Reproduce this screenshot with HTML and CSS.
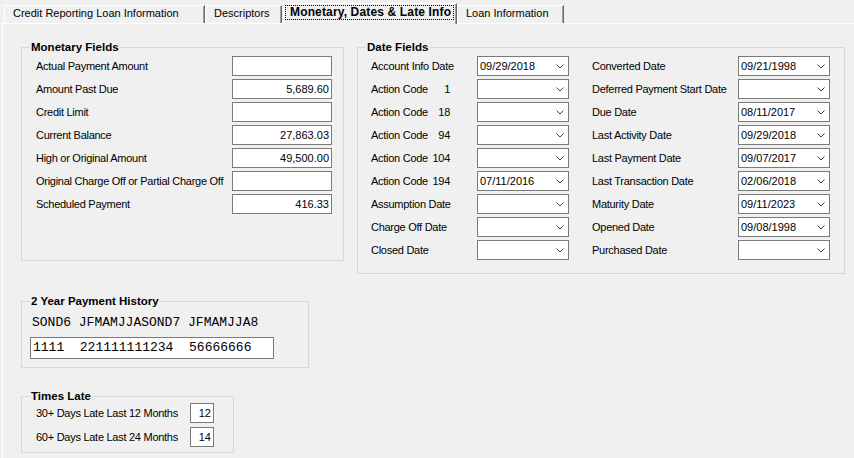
FILE: index.html
```html
<!DOCTYPE html>
<html>
<head>
<meta charset="utf-8">
<link rel="stylesheet" href="styles.css">
</head>
<body>
<div class="tabs">
  <div class="tab t1">Credit Reporting Loan Information</div>
  <div class="tab t2">Descriptors</div>
  <div class="tab sel"><span class="focus">Monetary, Dates &amp; Late Info</span></div>
  <div class="tab t4">Loan Information</div>
</div>
<div class="page">
  <div class="left">
    <fieldset class="grp monetary">
      <legend>Monetary Fields</legend>
      <div class="mrows">
        <span class="lbl">Actual Payment Amount</span><span class="txt"></span>
        <span class="lbl">Amount Past Due</span><span class="txt">5,689.60</span>
        <span class="lbl">Credit Limit</span><span class="txt"></span>
        <span class="lbl">Current Balance</span><span class="txt">27,863.03</span>
        <span class="lbl">High or Original Amount</span><span class="txt">49,500.00</span>
        <span class="lbl">Original Charge Off or Partial Charge Off</span><span class="txt"></span>
        <span class="lbl">Scheduled Payment</span><span class="txt">416.33</span>
      </div>
    </fieldset>
    <fieldset class="grp history">
      <legend>2 Year Payment History</legend>
      <div class="hhead">SOND6 JFMAMJJASOND7 JFMAMJJA8</div>
      <div class="hbox">1111  221111111234  56666666</div>
    </fieldset>
    <fieldset class="grp late">
      <legend>Times Late</legend>
      <div class="lrows">
        <span class="lbl">30+ Days Late Last 12 Months</span><span class="txt">12</span>
        <span class="lbl">60+ Days Late Last 24 Months</span><span class="txt">14</span>
      </div>
    </fieldset>
  </div>
  <fieldset class="grp dates">
    <legend>Date Fields</legend>
    <div class="dgrid">
      <span class="lbl">Account Info Date</span>
      <span class="combo"><span>09/29/2018</span><svg class="chev" width="8" height="5" viewBox="0 0 8 5"><polyline points="0.5,0.5 4,4 7.5,0.5"/></svg></span>
      <span class="lbl">Converted Date</span>
      <span class="combo"><span>09/21/1998</span><svg class="chev" width="8" height="5" viewBox="0 0 8 5"><polyline points="0.5,0.5 4,4 7.5,0.5"/></svg></span>

      <span class="lbl ac"><span>Action Code</span><span>1</span></span>
      <span class="combo"><span></span><svg class="chev" width="8" height="5" viewBox="0 0 8 5"><polyline points="0.5,0.5 4,4 7.5,0.5"/></svg></span>
      <span class="lbl">Deferred Payment Start Date</span>
      <span class="combo"><span></span><svg class="chev" width="8" height="5" viewBox="0 0 8 5"><polyline points="0.5,0.5 4,4 7.5,0.5"/></svg></span>

      <span class="lbl ac"><span>Action Code</span><span>18</span></span>
      <span class="combo"><span></span><svg class="chev" width="8" height="5" viewBox="0 0 8 5"><polyline points="0.5,0.5 4,4 7.5,0.5"/></svg></span>
      <span class="lbl">Due Date</span>
      <span class="combo"><span>08/11/2017</span><svg class="chev" width="8" height="5" viewBox="0 0 8 5"><polyline points="0.5,0.5 4,4 7.5,0.5"/></svg></span>

      <span class="lbl ac"><span>Action Code</span><span>94</span></span>
      <span class="combo"><span></span><svg class="chev" width="8" height="5" viewBox="0 0 8 5"><polyline points="0.5,0.5 4,4 7.5,0.5"/></svg></span>
      <span class="lbl">Last Activity Date</span>
      <span class="combo"><span>09/29/2018</span><svg class="chev" width="8" height="5" viewBox="0 0 8 5"><polyline points="0.5,0.5 4,4 7.5,0.5"/></svg></span>

      <span class="lbl ac"><span>Action Code</span><span>104</span></span>
      <span class="combo"><span></span><svg class="chev" width="8" height="5" viewBox="0 0 8 5"><polyline points="0.5,0.5 4,4 7.5,0.5"/></svg></span>
      <span class="lbl">Last Payment Date</span>
      <span class="combo"><span>09/07/2017</span><svg class="chev" width="8" height="5" viewBox="0 0 8 5"><polyline points="0.5,0.5 4,4 7.5,0.5"/></svg></span>

      <span class="lbl ac"><span>Action Code</span><span>194</span></span>
      <span class="combo"><span>07/11/2016</span><svg class="chev" width="8" height="5" viewBox="0 0 8 5"><polyline points="0.5,0.5 4,4 7.5,0.5"/></svg></span>
      <span class="lbl">Last Transaction Date</span>
      <span class="combo"><span>02/06/2018</span><svg class="chev" width="8" height="5" viewBox="0 0 8 5"><polyline points="0.5,0.5 4,4 7.5,0.5"/></svg></span>

      <span class="lbl">Assumption Date</span>
      <span class="combo"><span></span><svg class="chev" width="8" height="5" viewBox="0 0 8 5"><polyline points="0.5,0.5 4,4 7.5,0.5"/></svg></span>
      <span class="lbl">Maturity Date</span>
      <span class="combo"><span>09/11/2023</span><svg class="chev" width="8" height="5" viewBox="0 0 8 5"><polyline points="0.5,0.5 4,4 7.5,0.5"/></svg></span>

      <span class="lbl">Charge Off Date</span>
      <span class="combo"><span></span><svg class="chev" width="8" height="5" viewBox="0 0 8 5"><polyline points="0.5,0.5 4,4 7.5,0.5"/></svg></span>
      <span class="lbl">Opened Date</span>
      <span class="combo"><span>09/08/1998</span><svg class="chev" width="8" height="5" viewBox="0 0 8 5"><polyline points="0.5,0.5 4,4 7.5,0.5"/></svg></span>

      <span class="lbl">Closed Date</span>
      <span class="combo"><span></span><svg class="chev" width="8" height="5" viewBox="0 0 8 5"><polyline points="0.5,0.5 4,4 7.5,0.5"/></svg></span>
      <span class="lbl">Purchased Date</span>
      <span class="combo"><span></span><svg class="chev" width="8" height="5" viewBox="0 0 8 5"><polyline points="0.5,0.5 4,4 7.5,0.5"/></svg></span>
    </div>
  </fieldset>
</div>
</body>
</html>
```
FILE: styles.css
```css
html, body {
  margin: 0;
  padding: 0;
}
body {
  width: 854px;
  height: 458px;
  overflow: hidden;
  background: #f0f0f0;
  font-family: "Liberation Sans", Arial, sans-serif;
  font-size: 11px;
  color: #000;
}

/* ---------- tabs ---------- */
.tabs {
  display: flex;
  align-items: flex-end;
  height: 23px;
  padding-left: 4px;
}
.tab {
  box-sizing: border-box;
  height: 18px;
  border-top: 1px solid #fff;
  border-left: 1px solid #fff;
  border-right: 1px solid #696969;
  box-shadow: inset -1px 0 #a0a0a0;
  padding-left: 8px;
  line-height: 14px;
  white-space: nowrap;
}
.t1 { width: 201px; }
.t2 { width: 77px; }
.t4 { width: 107px; }
.sel {
  position: relative;
  z-index: 1;
  width: 174px;
  height: 21px;
  margin-left: 1px;
  margin-bottom: -1px;
  padding: 1px 0 0 1px;
  background: #f0f0f0;
  font-weight: bold;
  font-size: 12px;
  letter-spacing: 0.15px;
}
.focus {
  display: block;
  height: 15px;
  box-sizing: border-box;
  width: 169px;
  border: 1px dotted #000;
  padding-left: 4px;
  line-height: 13px;
}

/* ---------- page ---------- */
.page {
  margin-left: 2px;
  height: 435px;
  box-sizing: border-box;
  border-top: 1px solid #fff;
  border-left: 1px solid #fff;
  padding: 16px 0 0 18px;
  display: flex;
  align-items: flex-start;
  gap: 13px;
}
.left {
  display: flex;
  flex-direction: column;
  align-items: flex-start;
}

.grp {
  margin: 0;
  min-width: 0;
  border: 1px solid #d8d8d8;
  padding: 2px 0 0 0;
  box-sizing: border-box;
}
.grp legend {
  font-weight: bold;
  font-size: 11.5px;
  line-height: 14px;
  padding: 0 1px;
  margin-left: 8px;
}

.lbl {
  white-space: nowrap;
  line-height: 20px;
  letter-spacing: -0.27px;
}
.txt {
  box-sizing: border-box;
  height: 20px;
  border: 1px solid #7a7a7a;
  background: #fff;
  text-align: right;
  padding-right: 2px;
  line-height: 18px;
}

/* monetary */
.monetary {
  width: 323px;
  padding-bottom: 46px;
}
.mrows {
  display: grid;
  grid-template-columns: 196px 100px;
  row-gap: 3px;
  margin-left: 14px;
}

/* history */
.history {
  width: 288px;
  margin-top: 33px;
  padding: 0 0 8px 0;
}
.hhead {
  font-family: "Liberation Mono", "Courier New", monospace;
  font-size: 13px;
  line-height: 16px;
  margin: 7px 0 0 10px;
  white-space: pre;
}
.hbox {
  box-sizing: border-box;
  width: 244px;
  height: 22px;
  margin: 6px 0 0 8px;
  border: 1px solid #7a7a7a;
  background: #fff;
  font-family: "Liberation Mono", "Courier New", monospace;
  font-size: 13px;
  line-height: 20px;
  padding-left: 2px;
  white-space: pre;
}

/* times late */
.late {
  width: 213px;
  margin-top: 21px;
  padding: 0 0 5px 0;
}
.lrows {
  display: grid;
  grid-template-columns: 154px 24px;
  row-gap: 4px;
  margin-left: 14px;
}

/* dates */
.dates {
  width: 488px;
  padding-bottom: 13px;
}
.dgrid {
  display: grid;
  grid-template-columns: 106px 92px 169px 92px;
  row-gap: 3px;
  margin-left: 13px;
}
.dgrid > .lbl:nth-child(4n+3) {
  margin-left: 23px;
}
.ac {
  display: flex;
  justify-content: space-between;
  width: 79px;
}
.combo {
  box-sizing: border-box;
  height: 20px;
  border: 1px solid #7a7a7a;
  background: #fff;
  display: flex;
  align-items: center;
  justify-content: space-between;
  padding: 0 4px 0 2px;
  line-height: 18px;
}
.chev {
  display: block;
  fill: none;
  stroke: #404040;
  stroke-width: 1;
}
```
